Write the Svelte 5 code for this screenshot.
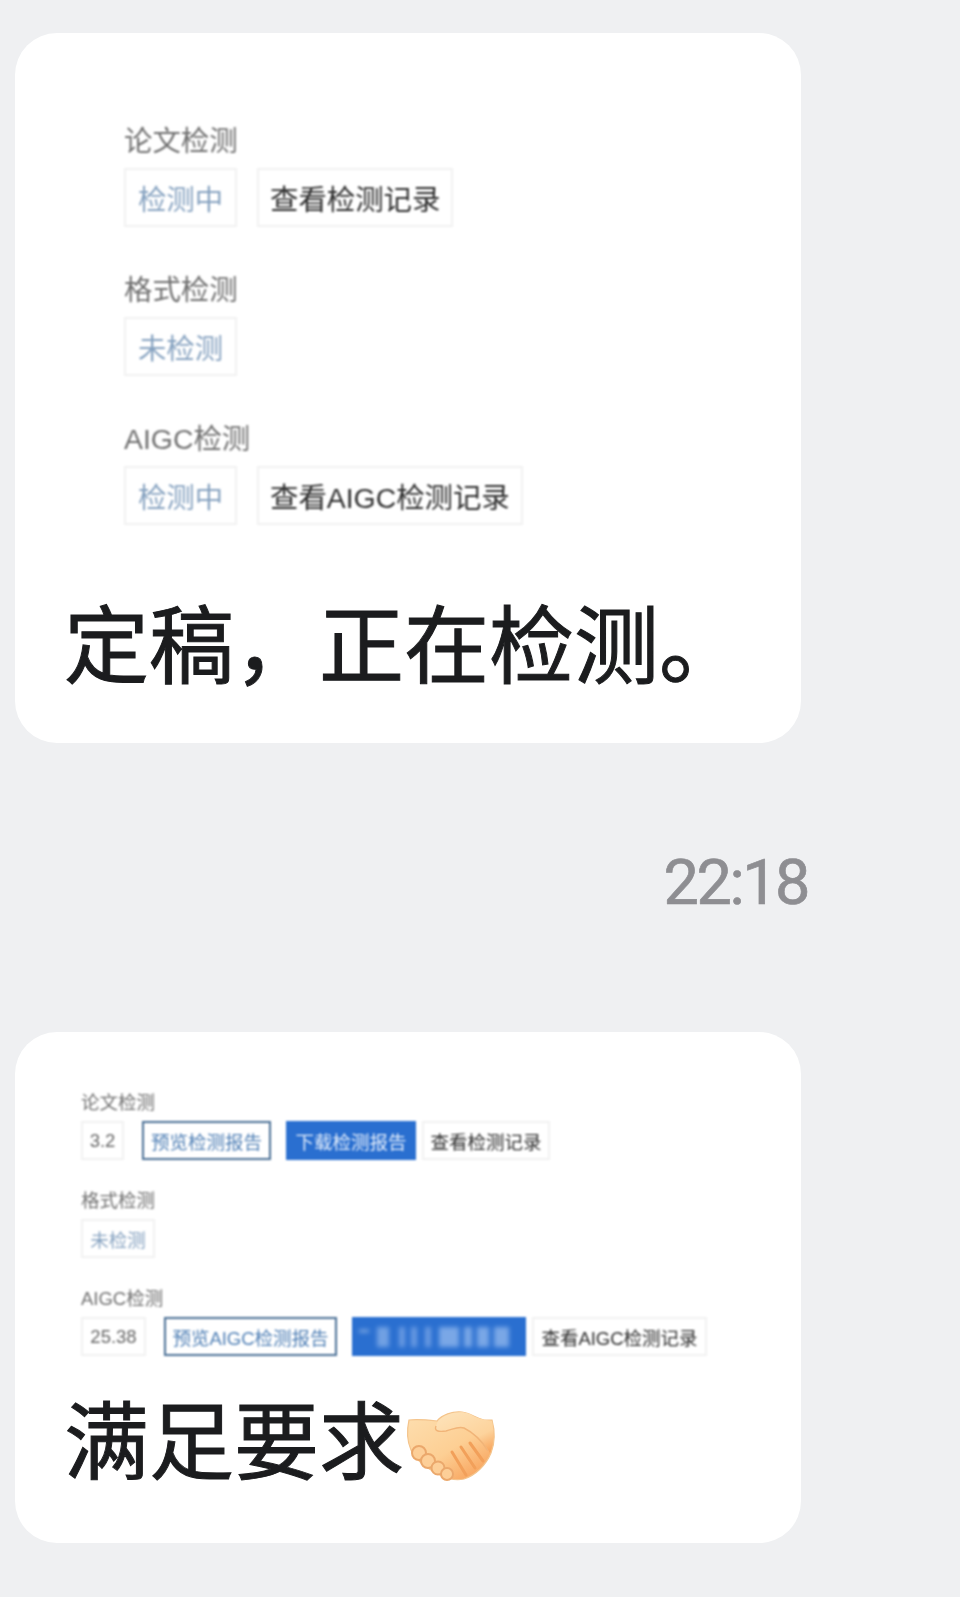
<script>
  // first message: still being checked
  const firstGroups = [
    { title: "论文检测", buttons: [{ text: "检测中", kind: "status" }, { text: "查看检测记录", kind: "plain" }] },
    { title: "格式检测", buttons: [{ text: "未检测", kind: "status" }] },
    { title: "AIGC检测", buttons: [{ text: "检测中", kind: "status" }, { text: "查看AIGC检测记录", kind: "plain" }] }
  ];

  // second message: results are back
  const secondGroups = [
    {
      title: "论文检测",
      buttons: [
        { text: "3.2", kind: "score", w: 43 },
        { text: "预览检测报告", kind: "outline", w: 129 },
        { text: "下载检测报告", kind: "solid", w: 130 },
        { text: "查看检测记录", kind: "plain", w: 128 }
      ]
    },
    { title: "格式检测", buttons: [{ text: "未检测", kind: "status", w: 74 }] },
    {
      title: "AIGC检测",
      buttons: [
        { text: "25.38", kind: "score", w: 65 },
        { text: "预览AIGC检测报告", kind: "outline", w: 173 },
        { text: "", kind: "solid masked", w: 174 },
        { text: "查看AIGC检测记录", kind: "plain", w: 175 }
      ]
    }
  ];
</script>

<div class="page">
  <div class="bubble first">
    <div class="shot">
      {#each firstGroups as group}
        <div class="group">
          <div class="title">{group.title}</div>
          <div class="row">
            {#each group.buttons as b}
              <span class="btn {b.kind}">{b.text}</span>
            {/each}
          </div>
        </div>
      {/each}
    </div>
    <p class="message">定稿，正在检测。</p>
  </div>

  <div class="time">22:18</div>

  <div class="bubble second">
    <div class="shot">
      {#each secondGroups as group}
        <div class="group">
          <div class="title">{group.title}</div>
          <div class="row">
            {#each group.buttons as b}
              <span class="btn {b.kind}" style="width: {b.w}px">
                {#if b.text}{b.text}{:else}<i class="smear"></i>{/if}
              </span>
            {/each}
          </div>
        </div>
      {/each}
    </div>
    <p class="message">满足要求<svg class="shake" viewBox="0 0 115 95" aria-label="握手">
        <defs>
          <linearGradient id="skin" x1="0.1" y1="0.1" x2="0.8" y2="0.95">
            <stop offset="0" stop-color="#fddcab" />
            <stop offset="0.55" stop-color="#fdcf94" />
            <stop offset="1" stop-color="#f8a55f" />
          </linearGradient>
          <linearGradient id="upper" x1="0.2" y1="0" x2="0.9" y2="1">
            <stop offset="0" stop-color="#fde2b8" />
            <stop offset="0.65" stop-color="#fdd39c" />
            <stop offset="1" stop-color="#f7a45c" />
          </linearGradient>
        </defs>
        <path d="M15 21 C24 20 34 21 43 22 C48 16 58 12 68 13 C76 14 82 19 90 21 L98 21 C101 32 101 44 97 54 C92 66 82 76 70 80 C62 82 54 80 46 76 C34 70 22 62 17 51 C13 42 13 30 15 21 Z" fill="url(#skin)" stroke="#f4c48c" stroke-width="1.2" />
        <path d="M42 27 C40 32 44 33 52 32 C60 30 64 27 70 29 C80 34 90 43 96 54 C100 44 100 32 98 22 C90 21 82 19 76 15 C66 11 52 14 44 22 Z" fill="url(#upper)" />
        <path d="M42 27 C40 32 44 33 52 32 C60 30 64 27 70 29 C80 34 88 42 94 52" fill="none" stroke="#f1b478" stroke-width="1.4" />
        <path d="M58 53 L72 76 M67 48 L81 69 M76 44 L89 62" fill="none" stroke="#f2a05a" stroke-width="3" stroke-linecap="round" />
        <circle cx="25" cy="54" r="7" fill="#fdcf98" stroke="#eba86c" stroke-width="2" />
        <circle cx="34" cy="62" r="7" fill="#fdcf98" stroke="#eba86c" stroke-width="2" />
        <circle cx="44" cy="69" r="6.5" fill="#fdcf98" stroke="#eba86c" stroke-width="2" />
        <circle cx="53" cy="75" r="6" fill="#fdcf98" stroke="#eba86c" stroke-width="2" />
      </svg></p>
  </div>
</div>

<style>
  :global(body) {
    margin: 0;
    background: #eff0f2;
  }

  .page {
    height: 1597px;
    padding: 33px 0 0 15px;
    box-sizing: border-box;
    overflow: hidden;
    font-family: "Liberation Sans", "Noto Sans CJK SC", sans-serif;
  }

  .bubble {
    width: 786px;
    box-sizing: border-box;
    background: #fff;
    border-radius: 42px;
  }

  .bubble.first {
    height: 710px;
    padding-top: 91px;
  }

  .bubble.second {
    height: 511px;
    padding-top: 60px;
  }

  .first .shot {
    padding-left: 109px;
  }

  .second .shot {
    padding-left: 66px;
  }

  /* the pasted screenshots are soft, not crisp */
  .shot {
    filter: blur(0.8px);
  }

  .group {
    display: flex;
    flex-direction: column;
  }

  .first .group {
    gap: 10px;
    margin-bottom: 46px;
  }

  .first .group:last-child {
    margin-bottom: 0;
  }

  .second .group {
    gap: 7px;
    margin-bottom: 30px;
  }

  .second .group:last-child {
    margin-bottom: 0;
  }

  .title {
    color: #6f6f6f;
  }

  .first .title {
    font-size: 28.4px;
    line-height: 34px;
  }

  .second .title {
    font-size: 18.5px;
    line-height: 22px;
  }

  .row {
    display: flex;
  }

  .first .row {
    gap: 20px;
  }

  .second .row {
    gap: 15px;
  }

  .second .row .score {
    margin-right: 3px;
  }

  /* the last two buttons sit closer together */
  .second .row .solid {
    margin-right: -9px;
  }

  .btn {
    display: flex;
    align-items: center;
    justify-content: center;
    box-sizing: border-box;
    border: 2px solid #f1f1f1;
    white-space: nowrap;
    color: #2c2c2c;
  }

  .first .btn {
    height: 59px;
    padding: 0 11px;
    font-size: 28.4px;
  }

  .first .btn.status {
    width: 113px;
  }

  .second .btn {
    height: 39px;
    font-size: 18.5px;
  }

  .btn.status {
    color: #86a2c0;
  }

  .btn.score {
    color: #666;
  }

  .btn.outline {
    border-color: #4a6f96;
    color: #4f7fb5;
  }

  .btn.solid {
    border: none;
    background: #2a6fd0;
    color: #e4eefb;
  }

  /* the censored button label: pale vertical streaks plus a dash at the left */
  .smear {
    display: block;
    width: 160px;
    height: 20px;
    opacity: 0.7;
    filter: blur(2px);
    background:
      linear-gradient(#e6effb, #e6effb) 0 3px / 10px 2px no-repeat,
      linear-gradient(90deg,
        transparent 0 18px, #8fb6ec 18px 30px,
        transparent 30px 40px, #86aeea 40px 46px,
        transparent 46px 52px, #86aeea 52px 58px,
        transparent 58px 66px, #86aeea 66px 72px,
        transparent 72px 80px, #9cbff0 80px 100px,
        transparent 100px 105px, #9cbff0 105px 113px,
        transparent 113px 118px, #9cbff0 118px 130px,
        transparent 130px 135px, #9cbff0 135px 150px,
        transparent 150px);
  }

  .message {
    margin: 0;
    padding-left: 49px;
    display: flex;
    align-items: center;
    font-family: "Noto Sans CJK SC", sans-serif;
    font-size: 85px;
    -webkit-text-stroke: 1px #1b1c1e;
    color: #1b1c1e;
    white-space: nowrap;
  }

  .first .message {
    margin-top: 55px;
    line-height: 120px;
  }

  .second .message {
    margin-top: 20px;
    line-height: 120px;
  }

  .shake {
    width: 115px;
    height: 95px;
    margin: 20px 0 0 -10px;
  }

  .time {
    width: 793px;
    margin: 95px 0 104px;
    text-align: right;
    font-family: Roboto, sans-serif;
    font-size: 63px;
    -webkit-text-stroke: 0.7px #8e8e92;
    letter-spacing: -2.5px;
    line-height: 90px;
    color: #8e8e92;
  }
</style>
